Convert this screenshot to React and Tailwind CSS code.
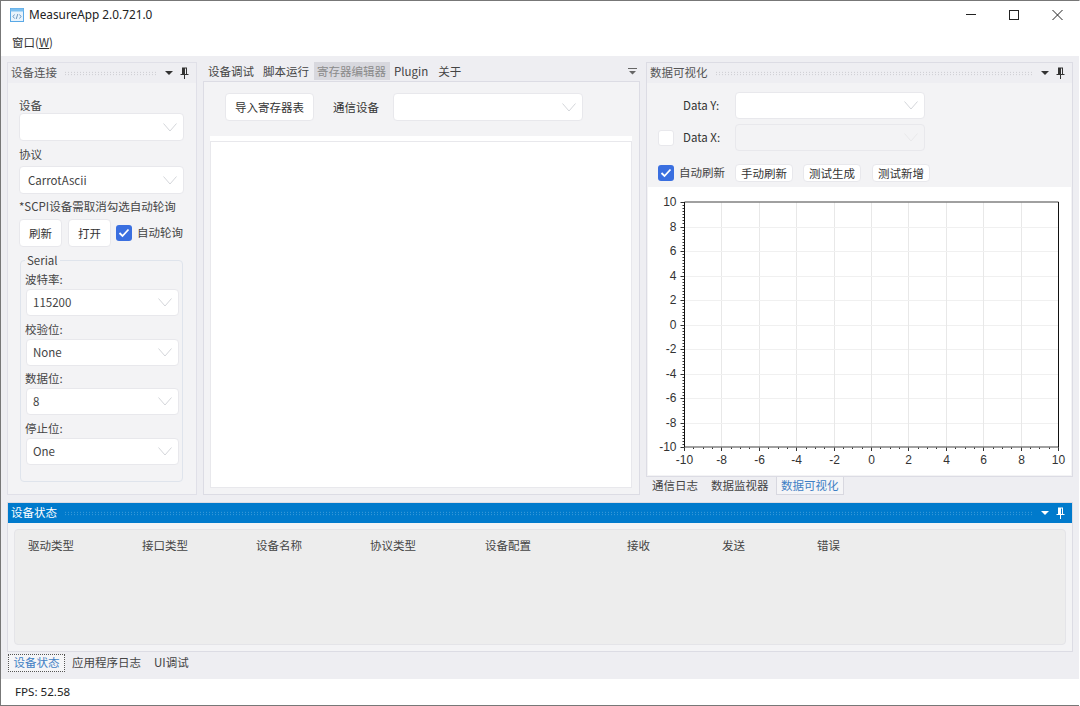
const FONT = { fontFamily: '"Noto Sans CJK SC", sans-serif' };

function Chevron({ faded }) {
  return (
    <svg width="14" height="9" viewBox="0 0 14 9" className="shrink-0">
      <path d="M0.5 0.5 L7 8 L13.5 0.5" fill="none" stroke={faded ? "#e8e8ea" : "#d4d6da"} strokeWidth="1" />
    </svg>
  );
}

function Select({ value, className = "", disabled }) {
  return (
    <div
      className={`flex items-center justify-between rounded-[4px] border border-[#e8e8ec] pr-[6px] text-[11.5px] text-[#444] ${
        disabled ? "bg-[#f3f3f5]" : "bg-white"
      } ${className}`}
    >
      <span className="pt-[1px]">{value}</span>
      <Chevron faded={disabled} />
    </div>
  );
}

function Btn({ children, className = "" }) {
  return (
    <div className={`flex items-center justify-center rounded-[4px] border border-[#e8e8ec] bg-white pt-[1px] text-[11.5px] text-[#333] ${className}`}>
      {children}
    </div>
  );
}

function Check({ checked }) {
  return checked ? (
    <div className="flex h-[16px] w-[16px] shrink-0 items-center justify-center rounded-[3px] bg-[#3a6fe0]">
      <svg width="12" height="10" viewBox="0 0 12 10">
        <path d="M1.5 5 L4.5 8 L10.5 1.5" fill="none" stroke="white" strokeWidth="1.8" />
      </svg>
    </div>
  ) : (
    <div className="h-[16px] w-[16px] shrink-0 rounded-[3px] border border-[#e8e8ec] bg-white" />
  );
}

// dotted grip strip and pin in a dock panel's title
function PanelTitle({ title, active }) {
  return (
    <div className={`flex h-[20px] shrink-0 items-center pl-[3px] pr-[7px] text-[11.5px] ${active ? "bg-[#007acc] text-white" : "bg-[#eeeef2] text-[#555]"}`}>
      <span className="whitespace-nowrap">{title}</span>
      <div
        className="mx-[7px] h-[5px] flex-1"
        style={{
          backgroundImage: `radial-gradient(${active ? "#4aa3dc" : "#c4c4ca"} 0.7px, transparent 0.8px)`,
          backgroundSize: "3px 2.5px",
        }}
      />
      <span className="mr-[7px] h-0 w-0 border-x-[4px] border-t-[4px] border-x-transparent" style={{ borderTopColor: active ? "#fff" : "#333" }} />
      <svg width="9" height="12" viewBox="0 0 9 12">
        <path d="M2 0.5 H7 V7 H8.5 V8 H5 V12 H4 V8 H0.5 V7 H2 Z M5 1.5 V7 H6 V1.5 Z" fill={active ? "#fff" : "#333"} fillRule="evenodd" />
      </svg>
    </div>
  );
}

function Field({ label, value }) {
  return (
    <>
      <div className="ml-[-1px] h-[19px] text-[11.5px] leading-[19px] text-[#444]">{label}</div>
      <Select value={value} className="mb-[3.5px] h-[27px] w-[153px] pl-[6px]" />
    </>
  );
}

function LeftPanel() {
  return (
    <div className="flex w-[190px] shrink-0 flex-col border border-[#e0e0e8] bg-[#f3f3f5]">
      <PanelTitle title="设备连接" />
      <div className="flex flex-1 flex-col pl-[11px] pt-[13px]">
        <div className="h-[17px] text-[11.5px] leading-[18px] text-[#444]">设备</div>
        <Select className="mb-[5px] h-[28px] w-[165px] pl-[8px]" />
        <div className="h-[20px] text-[11.5px] leading-[17px] text-[#444]">协议</div>
        <Select value="CarrotAscii" className="h-[28px] w-[165px] pl-[8px]" />
        <div className="mt-[3px] h-[20px] whitespace-nowrap text-[11.5px] leading-[19px] text-[#444]">*SCPI设备需取消勾选自动轮询</div>
        <div className="mt-[2px] flex items-center">
          <Btn className="h-[28px] w-[43px]">刷新</Btn>
          <Btn className="ml-[6px] h-[28px] w-[43px]">打开</Btn>
          <div className="ml-[5px]"><Check checked /></div>
          <span className="ml-[5px] whitespace-nowrap text-[11.5px] text-[#444]">自动轮询</span>
        </div>
        <div className="relative ml-[1px] mt-[13px] h-[222px] w-[163px] rounded-[4px] border border-[#dfe4ec] pl-[5px] pt-[9px]">
          <span className="absolute left-[4px] top-[-8px] bg-[#f3f3f5] px-[2px] text-[11.5px] leading-[14px] text-[#444]">Serial</span>
          <Field label="波特率:" value="115200" />
          <Field label="校验位:" value="None" />
          <Field label="数据位:" value="8" />
          <Field label="停止位:" value="One" />
        </div>
      </div>
    </div>
  );
}

function CenterPanel() {
  return (
    <div className="flex w-[437px] shrink-0 flex-col">
      <div className="flex h-[19px] items-start text-[11.5px] text-[#444]">
        <div className="flex flex-1 pl-[0.5px] leading-[18px]">
          <span className="whitespace-nowrap px-[4.5px]">设备调试</span>
          <span className="whitespace-nowrap px-[4.5px]">脚本运行</span>
          <span className="whitespace-nowrap bg-[#d8d8de] px-[3.5px] text-[#8a8a8a]">寄存器编辑器</span>
          <span className="whitespace-nowrap px-[4.5px]">Plugin</span>
          <span className="ml-[1px] whitespace-nowrap px-[4.5px]">关于</span>
        </div>
        <svg width="9" height="8" viewBox="0 0 9 8" className="mr-[3px] mt-[5px]">
          <path d="M0 1 H9 V2 H0 Z M1 4 H8 L4.5 7.5 Z" fill="#666" />
        </svg>
      </div>
      <div className="flex flex-1 flex-col border border-[#dcdce4] bg-[#f3f3f5]">
        <div className="flex h-[54px] shrink-0 items-start pl-[21px] pt-[11px]">
          <Btn className="h-[28px] w-[89px]">导入寄存器表</Btn>
          <span className="ml-[19px] text-[11.5px] leading-[29px] text-[#333]">通信设备</span>
          <Select className="ml-[14px] h-[28px] w-[190px]" />
        </div>
        <div className="mb-[6px] ml-[6px] mr-[7px] flex flex-1 flex-col bg-white">
          <div className="h-[5px] bg-white" />
          <div className="flex-1 border border-[#e8e8ec] bg-white" />
        </div>
      </div>
    </div>
  );
}

// chart plot: ticks and grid are a drawing
function Chart() {
  const x0 = 684.5, x1 = 1058.5, y0 = 202, y1 = 447;
  const nums = [-10, -8, -6, -4, -2, 0, 2, 4, 6, 8, 10];
  const X = (v) => Math.round(x0 + ((v + 10) / 20) * (x1 - x0) - 0.5) + 0.5;
  const Y = (v) => Math.round(y1 - ((v + 10) / 20) * (y1 - y0)) + 0.5;
  const minorX = [];
  for (let i = -10; i <= 10; i += 0.5) minorX.push(i);
  const minorY = [];
  for (let i = -10; i <= 10; i += 0.25) minorY.push(i);
  return (
    <svg viewBox="648 187 423 288" className="block h-[288px] w-[423px]">
      {nums.slice(1, -1).map((n) => (
        <g key={n}>
          <line x1={X(n)} x2={X(n)} y1={y0} y2={y1} stroke="#e8e8e8" />
          <line x1={x0} x2={x1} y1={Y(n)} y2={Y(n)} stroke="#f0f0f0" />
        </g>
      ))}
      {minorX.map((n) => (
        <line key={n} x1={X(n)} x2={X(n)} y1={y1} y2={y1 + 2} stroke="#333" />
      ))}
      {minorY.map((n) => (
        <line key={n} x1={x0 - 2} x2={x0} y1={Y(n)} y2={Y(n)} stroke="#333" />
      ))}
      {nums.map((n) => (
        <g key={"t" + n}>
          <line x1={X(n)} x2={X(n)} y1={y1} y2={y1 + 4} stroke="#333" />
          <line x1={x0 - 4} x2={x0} y1={Y(n)} y2={Y(n)} stroke="#333" />
          <text x={X(n)} y={y1 + 17} textAnchor="middle" fontSize="12" fill="#333" fontFamily="Liberation Sans">{n}</text>
          <text x={x0 - 8} y={Y(n) + 3.5} textAnchor="end" fontSize="12" fill="#333" fontFamily="Liberation Sans">{n}</text>
        </g>
      ))}
      <line x1={x0} x2={x1} y1={y0} y2={y0} stroke="#808080" strokeWidth="1.5" />
      <line x1={x0} x2={x1} y1={y1} y2={y1} stroke="#808080" strokeWidth="1.5" />
      <line x1={x0} x2={x0} y1={y0} y2={y1} stroke="#111" />
      <line x1={x1} x2={x1} y1={y0} y2={y1} stroke="#111" />
    </svg>
  );
}

function RightPanel() {
  return (
    <div className="flex w-[427px] shrink-0 flex-col">
      <div className="flex flex-1 flex-col border border-[#dcdce4] bg-[#f3f3f5]">
        <PanelTitle title="数据可视化" />
        <div className="mt-[9px] flex h-[27px] items-center">
          <span className="ml-[36px] w-[52px] text-[11.5px] text-[#333]">Data Y:</span>
          <Select className="h-[27px] w-[190px]" />
        </div>
        <div className="mt-[5px] flex h-[27px] items-center">
          <div className="ml-[11px]"><Check /></div>
          <span className="ml-[9px] w-[52px] text-[11.5px] text-[#333]">Data X:</span>
          <Select disabled className="h-[27px] w-[190px]" />
        </div>
        <div className="mt-[13px] flex h-[18px] items-center">
          <div className="ml-[11px]"><Check checked /></div>
          <span className="ml-[5px] whitespace-nowrap text-[11.5px] text-[#444]">自动刷新</span>
          <Btn className="ml-[10px] h-[18px] w-[58px]">手动刷新</Btn>
          <Btn className="ml-[10px] h-[18px] w-[58px]">测试生成</Btn>
          <Btn className="ml-[11px] h-[18px] w-[58px]">测试新增</Btn>
        </div>
        <div className="mx-[1px] mb-[1px] mt-[5px] flex-1 bg-white"><Chart /></div>
      </div>
      <div className="flex h-[18px] shrink-0 items-start pl-[3px] text-[11.5px] text-[#444]">
        <span className="px-[3px] leading-[17px]">通信日志</span>
        <span className="ml-[7px] px-[3px] leading-[17px]">数据监视器</span>
        <span className="ml-[4px] border border-t-0 border-[#d8d8e0] bg-[#f5f5f7] px-[4.5px] leading-[17px] text-[#3f7fc4]">数据可视化</span>
      </div>
    </div>
  );
}

function BottomPanel() {
  const cols = [
    ["驱动类型", 114], ["接口类型", 114], ["设备名称", 114], ["协议类型", 115],
    ["设备配置", 142], ["接收", 95], ["发送", 95], ["错误", 60],
  ];
  return (
    <div className="mt-[7px] flex h-[150px] shrink-0 flex-col border border-[#dcdce4] bg-[#f3f3f5]">
      <PanelTitle title="设备状态" active />
      <div className="m-[6px] flex-1 rounded-[4px] border border-[#e4e4e8] bg-[#ededed] pl-[13px] pt-[6px]">
        <div className="flex text-[11.5px] leading-[18px] text-[#444]">
          {cols.map(([c, w]) => (
            <span key={c} className="shrink-0" style={{ width: w }}>{c}</span>
          ))}
        </div>
      </div>
    </div>
  );
}

export default function App() {
  return (
    <div className="flex h-[706px] w-[1080px] flex-col overflow-hidden border-l border-r border-t border-[#777] border-r-white bg-white" style={FONT}>
      <div className="flex h-[28px] shrink-0 items-center text-[11.8px] text-[#222]">
        <svg width="14" height="14" viewBox="0 0 14 14" className="ml-[9px]">
          <rect x="0.5" y="0.5" width="13" height="13" fill="#e8f3fc" stroke="#5aa9e6" />
          <rect x="0.5" y="0.5" width="13" height="3" fill="#7cc0f0" />
          <path d="M4.5 6.5 L3 8.5 L4.5 10.5 M9.5 6.5 L11 8.5 L9.5 10.5 M7.8 6 L6.2 11" fill="none" stroke="#4a7fb0" strokeWidth="0.8" />
        </svg>
        <span className="ml-[5px] flex-1" style={{ fontFamily: '"Noto Sans", sans-serif' }}>MeasureApp 2.0.721.0</span>
        <svg width="97" height="12" viewBox="0 0 97 12" className="mr-[16px]" fill="none" stroke="#222">
          <path d="M0 5.5 H10" />
          <rect x="43.5" y="1.5" width="9" height="9" />
          <path d="M86.5 1 L96.5 11 M96.5 1 L86.5 11" />
        </svg>
      </div>
      <div className="flex h-[27px] shrink-0 items-center pl-[11px] text-[11.5px] text-[#333]">
        窗口(<span className="underline">W</span>)
      </div>
      <div className="flex flex-1 flex-col bg-[#eeeef2] px-[6px] pt-[6px]">
        <div className="flex h-[433px] shrink-0 gap-[6px]">
          <LeftPanel />
          <CenterPanel />
          <RightPanel />
        </div>
        <BottomPanel />
        <div className="flex items-start text-[11.5px] text-[#444]">
          <span className="ml-[1px] mt-[2px] border border-dotted border-[#555] bg-[#f5f5f7] px-[4.5px] pb-[1px] leading-[15px] text-[#3f7fc4]">设备状态</span>
          <span className="ml-[7px] mt-[2px] leading-[17px]">应用程序日志</span>
          <span className="ml-[13px] mt-[2px] leading-[17px]">UI调试</span>
        </div>
      </div>
      <div className="flex h-[27px] shrink-0 items-center border-b border-[#777] pl-[14px] text-[11.6px] text-[#222]" style={{ fontFamily: '"Noto Sans", sans-serif' }}>
        FPS: 52.58
      </div>
    </div>
  );
}
